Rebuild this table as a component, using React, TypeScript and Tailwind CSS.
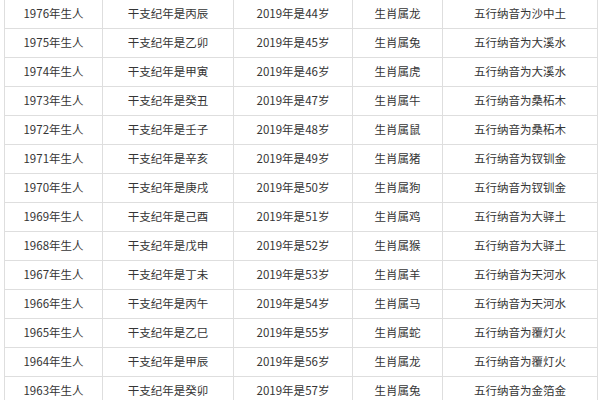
const rows = [
  ["1976", "丙辰", "44", "龙", "沙中土"],
  ["1975", "乙卯", "45", "兔", "大溪水"],
  ["1974", "甲寅", "46", "虎", "大溪水"],
  ["1973", "癸丑", "47", "牛", "桑柘木"],
  ["1972", "壬子", "48", "鼠", "桑柘木"],
  ["1971", "辛亥", "49", "猪", "钗钏金"],
  ["1970", "庚戌", "50", "狗", "钗钏金"],
  ["1969", "己酉", "51", "鸡", "大驿土"],
  ["1968", "戊申", "52", "猴", "大驿土"],
  ["1967", "丁未", "53", "羊", "天河水"],
  ["1966", "丙午", "54", "马", "天河水"],
  ["1965", "乙巳", "55", "蛇", "覆灯火"],
  ["1964", "甲辰", "56", "龙", "覆灯火"],
  ["1963", "癸卯", "57", "兔", "金箔金"],
];

const cell = "flex items-center justify-center border-r border-b border-[#dedede]";

export default function App() {
  return (
    <div
      className="w-[600px] h-[400px] overflow-hidden bg-white text-[11.5px] text-[#353535]"
      style={{ fontFamily: '"Noto Sans CJK SC", "Noto Sans", sans-serif' }}
    >
      <div className="ml-[4px] w-[594px] border-l border-[#dedede]">
        {rows.map(([year, ganzhi, age, animal, wuxing]) => (
          <div key={year} className="grid grid-cols-[98px_131px_119px_90px_155px] h-[29px]">
            <div className={cell}>{year}年生人</div>
            <div className={cell}>干支纪年是{ganzhi}</div>
            <div className={cell}>2019年是{age}岁</div>
            <div className={cell}>生肖属{animal}</div>
            <div className={cell}>五行纳音为{wuxing}</div>
          </div>
        ))}
      </div>
    </div>
  );
}
